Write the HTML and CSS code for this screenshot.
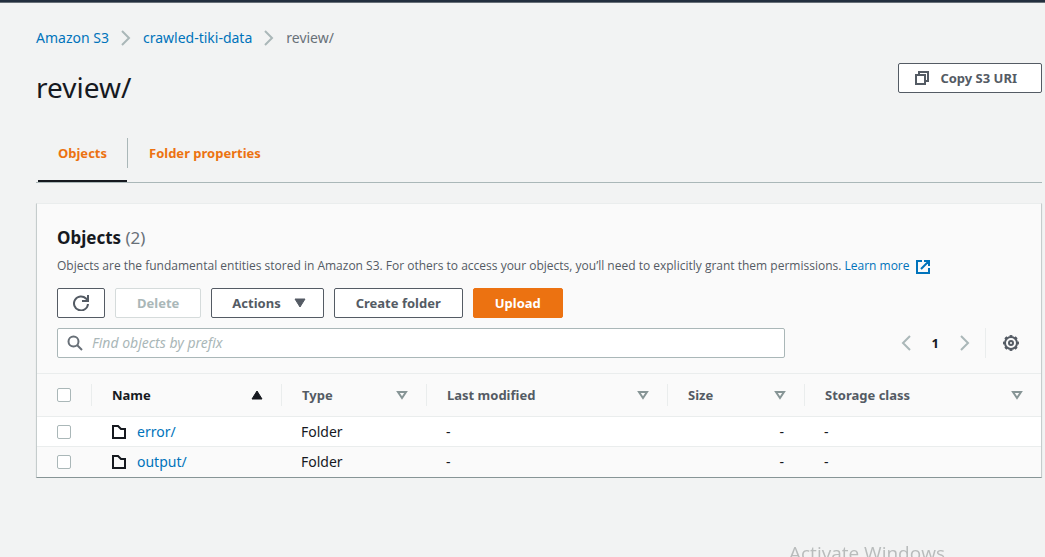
FILE: index.html
```html
<!DOCTYPE html>
<html lang="en">
<head>
<meta charset="utf-8">
<title>review/ - S3 bucket</title>
<link rel="stylesheet" href="styles.css">
</head>
<body>
<div class="topbar"></div>
<main class="page">
  <nav class="breadcrumbs" aria-label="Breadcrumbs">
    <a href="#">Amazon S3</a>
    <svg class="chevron" viewBox="0 0 10 16"><path d="M1 1l7 7-7 7"/></svg>
    <a href="#">crawled-tiki-data</a>
    <svg class="chevron" viewBox="0 0 10 16"><path d="M1 1l7 7-7 7"/></svg>
    <span>review/</span>
  </nav>
  <header class="heading">
    <h1>review/</h1>
    <button class="btn copy" type="button">
      <svg class="icon" viewBox="0 0 16 16"><path d="M2 5h9v9H2zM5 5V2h9v9h-3"/></svg>
      Copy S3 URI
    </button>
  </header>
  <nav class="tabs">
    <a class="tab active" href="#">Objects</a>
    <a class="tab" href="#">Folder properties</a>
  </nav>
  <section class="card">
    <div class="card-head">
      <h2>Objects <span>(2)</span></h2>
      <p class="description">Objects are the fundamental entities stored in Amazon S3. For others to access your objects, you’ll need to explicitly grant them permissions. <a href="#">Learn more <svg class="external" viewBox="0 0 16 16"><path d="M7 2H2v12h12V9M9 2h5v5M14 2L6 10"/></svg></a></p>
      <div class="actions">
        <button class="btn refresh" type="button" aria-label="Refresh"><svg class="icon" viewBox="0 0 16 16"><path d="M15 9A7 7 0 1 1 13 3.500L15 6M15 0v6H9"/></svg></button>
        <button class="btn" type="button" disabled>Delete</button>
        <button class="btn menu" type="button">Actions <svg class="caret" viewBox="0 0 12 10"><path d="M1 1h10L6 9z"/></svg></button>
        <button class="btn" type="button">Create folder</button>
        <button class="btn primary" type="button">Upload</button>
      </div>
      <div class="filter">
        <label class="search">
          <svg class="icon" viewBox="0 0 16 16"><circle cx="6.500" cy="6.500" r="5"/><path d="M10 10l5 5"/></svg>
          <input type="text" placeholder="Find objects by prefix" aria-label="Find objects by prefix">
        </label>
        <div class="pager">
          <button class="plain" type="button" aria-label="Previous page"><svg class="chevron" viewBox="0 0 10 16"><path d="M9 1L2 8l7 7"/></svg></button>
          <button class="plain current" type="button">1</button>
          <button class="plain" type="button" aria-label="Next page"><svg class="chevron" viewBox="0 0 10 16"><path d="M1 1l7 7-7 7"/></svg></button>
        </div>
        <button class="plain settings" type="button" aria-label="Preferences"><svg class="icon" viewBox="0 0 16 16"><circle cx="8" cy="8" r="6"/><circle cx="8" cy="8" r="7" pathLength="80" stroke-dasharray="5 5" stroke-dashoffset="2.500"/><circle cx="8" cy="8" r="2"/></svg></button>
      </div>
    </div>
    <table class="objects">
      <colgroup><col class="c-check"><col class="c-name"><col class="c-type"><col class="c-date"><col class="c-size"><col></colgroup>
      <thead>
        <tr>
          <th><div class="cell"><input type="checkbox" aria-label="Select all"></div></th>
          <th class="sorted"><div class="cell">Name <svg class="sort" viewBox="0 0 12 10"><path d="M1 9h10L6 1z"/></svg></div></th>
          <th><div class="cell">Type <svg class="sort" viewBox="0 0 12 10"><path d="M2 2h8L6 8z"/></svg></div></th>
          <th><div class="cell">Last modified <svg class="sort" viewBox="0 0 12 10"><path d="M2 2h8L6 8z"/></svg></div></th>
          <th><div class="cell">Size <svg class="sort" viewBox="0 0 12 10"><path d="M2 2h8L6 8z"/></svg></div></th>
          <th><div class="cell">Storage class <svg class="sort" viewBox="0 0 12 10"><path d="M2 2h8L6 8z"/></svg></div></th>
        </tr>
      </thead>
      <tbody>
        <tr>
          <td><input type="checkbox" aria-label="Select error/"></td>
          <td><a class="object" href="#"><svg class="folder" viewBox="0 0 16 16"><path d="M2 2h5l3 3h4v9H2z"/></svg>error/</a></td>
          <td>Folder</td><td>-</td><td class="number">-</td><td>-</td>
        </tr>
        <tr>
          <td><input type="checkbox" aria-label="Select output/"></td>
          <td><a class="object" href="#"><svg class="folder" viewBox="0 0 16 16"><path d="M2 2h5l3 3h4v9H2z"/></svg>output/</a></td>
          <td>Folder</td><td>-</td><td class="number">-</td><td>-</td>
        </tr>
      </tbody>
    </table>
  </section>
</main>
<div class="watermark">Activate Windows</div>
</body>
</html>
```
FILE: styles.css
```css
* { box-sizing: border-box; }
body {
  margin: 0;
  background: #f2f3f3;
  color: #16191f;
  font: 14px/20px "Noto Sans", "Open Sans", sans-serif;
}
a { color: #0073bb; text-decoration: none; }
svg { display: block; flex: none; fill: none; stroke: currentColor; stroke-width: 2; }
button, input { font: inherit; margin: 0; }
h1, h2, p { margin: 0; font-weight: 400; }

.topbar { height: 3px; background: #232f3e; border-bottom: 1px solid #687078; }
.page { padding: 25px 3px 0 36px; }

.breadcrumbs { display: flex; align-items: center; gap: 12px; color: #687078; }
.chevron { width: 10px; height: 16px; color: #aab7b8; }

.heading { display: flex; justify-content: space-between; align-items: flex-start; padding-top: 15px; }
.heading h1 { font-size: 28px; line-height: 36px; padding-top: 6px; }

.btn {
  display: flex;
  align-items: center;
  height: 30px;
  padding: 0 21px;
  border: 1px solid #545b64;
  border-radius: 2px;
  background: #fff;
  color: #545b64;
  font-size: 13px;
  font-weight: 700;
}
.btn:disabled { border-color: #d5dbdb; color: #aab7b8; }
.btn.primary { border-color: #ec7211; background: #ec7211; color: #fff; }
.btn.copy { padding: 0 24px 0 15px; gap: 10px; }
.btn.refresh { padding: 0 15px; }
.btn.menu { padding: 0 17px 0 20px; }
.icon { width: 16px; height: 16px; }
.caret { width: 12px; height: 10px; margin-left: 13px; fill: currentColor; stroke-width: 1; }

.tabs { display: flex; margin-top: 33px; padding-left: 2px; border-bottom: 1px solid #aab7b8; }
.tab {
  display: flex;
  padding: 0 20px 12px;
  border-bottom: 2px solid transparent;
  color: #ec7211;
  font-size: 13px;
  font-weight: 700;
  line-height: 30px;
}
.tab.active { border-color: #16191f; }
.tab + .tab { padding-left: 22px; background: linear-gradient(#aab7b8, #aab7b8) 0 0 / 1px 30px no-repeat; }

.card {
  margin-top: 20px;
  border: 1px solid #c5cccc;
  border-top-color: #eaeded;
  border-bottom-color: #879596;
  background: #fafafa;
  box-shadow: 0 1px 1px #d5dbdb;
}
.card-head { padding: 23px 20px 15px; }
.card h2 { font-size: 17px; line-height: 22px; font-weight: 700; }
.card h2 span { color: #687078; font-weight: 400; }
.description { margin-top: 7px; color: #545b64; font-size: 12px; line-height: 20px; font-family: "Open Sans", sans-serif; }
.external { display: inline-block; width: 16px; height: 16px; margin-left: 2px; vertical-align: -5px; }
.actions { display: flex; gap: 10px; margin-top: 12px; }

.filter { display: flex; align-items: center; margin-top: 10px; }
.search {
  display: flex;
  align-items: center;
  flex: 0 1 728px;
  height: 30px;
  padding: 0 9px;
  gap: 9px;
  border: 1px solid #aab7b8;
  border-radius: 2px;
  background: #fff;
  color: #687078;
}
.search input { flex: 1; min-width: 0; padding: 0; border: 0; outline: 0; background: none; }
.search input::placeholder { color: #aab7b8; font-style: italic; }
.plain { display: flex; padding: 0; border: 0; background: none; color: #545b64; }
.pager { display: flex; align-items: center; justify-content: flex-end; flex: 1; gap: 21px; padding-right: 15px; }
.current { color: #16191f; font-size: 13px; font-weight: 700; }
.settings { align-items: center; height: 30px; padding: 0 2px 0 17px; border-left: 1px solid #eaeded; }

.objects { width: 100%; table-layout: fixed; border-collapse: collapse; text-align: left; }
.c-check { width: 54px; }
.c-name { width: 190px; }
.c-type { width: 145px; }
.c-date { width: 241px; }
.c-size { width: 137px; }
th { padding: 10px 0; border: solid #eaeded; border-width: 1px 0; color: #545b64; font-size: 13px; }
th.sorted { color: #16191f; }
.cell { display: flex; align-items: center; justify-content: space-between; height: 22px; padding: 0 18px 0 20px; }
th + th .cell { border-left: 1px solid #eaeded; }
.sort { width: 12px; height: 10px; color: #879596; }
.sorted .sort { color: #16191f; fill: currentColor; stroke-width: 1; }
td { height: 30px; padding: 0 20px; }
tbody tr:first-child { background: #fff; border-bottom: 1px solid #eaeded; }
.number { text-align: right; }
.object { display: flex; align-items: center; gap: 10px; }
.folder { width: 16px; height: 16px; color: #16191f; }
input[type="checkbox"] {
  display: block;
  width: 14px;
  height: 14px;
  border: 1px solid #aab7b8;
  border-radius: 2px;
  background: #fff;
  appearance: none;
}

.watermark {
  position: fixed;
  left: 789px;
  top: 541px;
  color: #b9bcbc;
  font: 19px/24px "Open Sans", sans-serif;
}
```
